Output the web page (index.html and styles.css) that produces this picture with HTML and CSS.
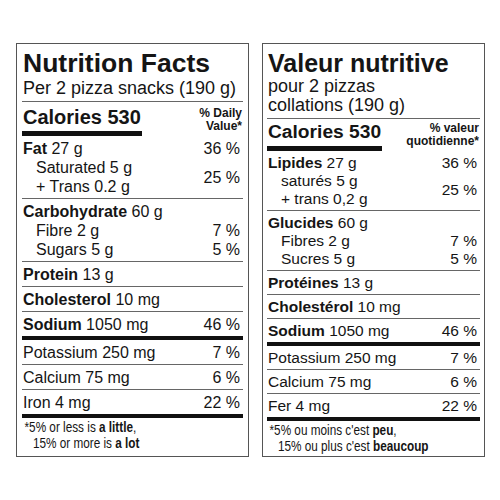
FILE: index.html
```html
<!DOCTYPE html>
<html lang="en">
<head>
  <meta charset="UTF-8">
  <title>Nutrition Facts</title>
  <link rel="stylesheet" href="styles.css">
</head>
<body>
  <div class="labels">
    <section class="label label--en">
      <div class="label-head">
        <h1 class="label-title">Nutrition Facts</h1>
        <p class="label-serving">Per 2 pizza snacks (190 g)</p>
      </div>
      <div class="label-cal">
        <div class="cal">Calories 530</div>
        <div class="dv-head">% Daily<br>Value*</div>
      </div>
      <div class="sec">
        <div class="row"><span><b>Fat</b> 27 g</span><span>36 %</span></div>
        <div class="row row--sub row--pair">
          <div><div>Saturated 5 g</div><div>+ Trans 0.2 g</div></div>
          <span>25 %</span>
        </div>
      </div>
      <div class="sec">
        <div class="row"><span><b>Carbohydrate</b> 60 g</span></div>
        <div class="row row--sub"><span>Fibre 2 g</span><span>7 %</span></div>
        <div class="row row--sub"><span>Sugars 5 g</span><span>5 %</span></div>
      </div>
      <div class="sec"><div class="row"><span><b>Protein</b> 13 g</span></div></div>
      <div class="sec"><div class="row"><span><b>Cholesterol</b> 10 mg</span></div></div>
      <div class="sec sec--thick"><div class="row"><span><b>Sodium</b> 1050 mg</span><span>46 %</span></div></div>
      <div class="sec"><div class="row"><span>Potassium 250 mg</span><span>7 %</span></div></div>
      <div class="sec"><div class="row"><span>Calcium 75 mg</span><span>6 %</span></div></div>
      <div class="sec sec--thick"><div class="row"><span>Iron 4 mg</span><span>22 %</span></div></div>
      <p class="foot"><span class="foot-text">*5% or less is <b>a little</b>,<br>15% or more is <b>a lot</b></span></p>
    </section>

    <section class="label label--fr" lang="fr">
      <div class="label-head">
        <h1 class="label-title">Valeur nutritive</h1>
        <p class="label-serving">pour 2 pizzas<br>collations (190 g)</p>
      </div>
      <div class="label-cal">
        <div class="cal">Calories 530</div>
        <div class="dv-head">% valeur<br>quotidienne*</div>
      </div>
      <div class="sec">
        <div class="row"><span><b>Lipides</b> 27 g</span><span>36 %</span></div>
        <div class="row row--sub row--pair">
          <div><div>saturés 5 g</div><div>+ trans 0,2 g</div></div>
          <span>25 %</span>
        </div>
      </div>
      <div class="sec">
        <div class="row"><span><b>Glucides</b> 60 g</span></div>
        <div class="row row--sub"><span>Fibres 2 g</span><span>7 %</span></div>
        <div class="row row--sub"><span>Sucres 5 g</span><span>5 %</span></div>
      </div>
      <div class="sec"><div class="row"><span><b>Protéines</b> 13 g</span></div></div>
      <div class="sec"><div class="row"><span><b>Cholestérol</b> 10 mg</span></div></div>
      <div class="sec sec--thick"><div class="row"><span><b>Sodium</b> 1050 mg</span><span>46 %</span></div></div>
      <div class="sec"><div class="row"><span>Potassium 250 mg</span><span>7 %</span></div></div>
      <div class="sec"><div class="row"><span>Calcium 75 mg</span><span>6 %</span></div></div>
      <div class="sec sec--thick"><div class="row"><span>Fer 4 mg</span><span>22 %</span></div></div>
      <p class="foot"><span class="foot-text">*5% ou moins c'est <b>peu</b>,<br>15% ou plus c'est <b>beaucoup</b></span></p>
    </section>
  </div>
</body>
</html>
```

FILE: styles.css
```css
* {
  box-sizing: border-box;
}
body {
  margin: 0;
  background: #fff;
  color: #151515;
  font-family: 'Liberation Sans', Arial, Helvetica, sans-serif;
}
.labels {
  display: flex;
  align-items: stretch;
  gap: 13px;
  padding: 43px 0 0 16px;
  height: 457px;
}
.label {
  border: 1px solid #555;
  padding: 5px var(--pad) 3px;
  font-size: var(--fs);
}
.label--en {
  width: 233px;
  --pad: 5px;
  --fs: 16px;
  --title-fs: 26.5px;
  --title-lh: 29px;
  --serving-lh: 21px;
  --serving-pb: 2px;
  --cal-fs: 20px;
  --cal-pt: 3px;
  --row-lh: 19px;
}
.label--fr {
  width: 223px;
  --pad: 4px;
  --fs: 15.5px;
  --title-fs: 25px;
  --title-lh: 28px;
  --serving-lh: 19px;
  --serving-pb: 3px;
  --cal-fs: 19.2px;
  --cal-pt: 1px;
  --row-lh: 18px;
}
.label-head {
  padding: 0 1px var(--serving-pb);
  border-bottom: 1px solid #666;
}
.label-title {
  margin: 0;
  font-size: var(--title-fs);
  line-height: var(--title-lh);
  font-weight: 700;
}
.label-serving {
  margin: 0;
  font-size: 18px;
  line-height: var(--serving-lh);
}
.label-cal {
  display: flex;
  justify-content: space-between;
  align-items: flex-end;
  padding-top: var(--cal-pt);
}
.cal {
  font-size: var(--cal-fs);
  font-weight: 700;
  line-height: 24px;
  padding: 0 1px 2px 1px;
  border-bottom: 5px solid #111;
}
.dv-head {
  font-size: 12px;
  font-weight: 700;
  line-height: 13px;
  text-align: right;
  padding: 0 1px 3px 0;
}
.sec {
  padding: 3px 0 2px;
  border-bottom: 1px solid #666;
}
.sec--thick {
  border-bottom: 4px solid #111;
}
.row {
  display: flex;
  justify-content: space-between;
  line-height: var(--row-lh);
  padding: 0 3px 0 1px;
}
.row--sub {
  padding-left: 14px;
}
.row--pair {
  align-items: center;
}
.foot {
  margin: 0;
  padding-top: 1px;
  font-size: 14px;
  line-height: 16px;
  white-space: nowrap;
}
/* narrow type: no condensed face is installed */
.foot-text {
  display: inline-block;
  padding-left: 13px;
  text-indent: -10px;
  transform: scaleX(0.84);
  transform-origin: 0 0;
}
```
